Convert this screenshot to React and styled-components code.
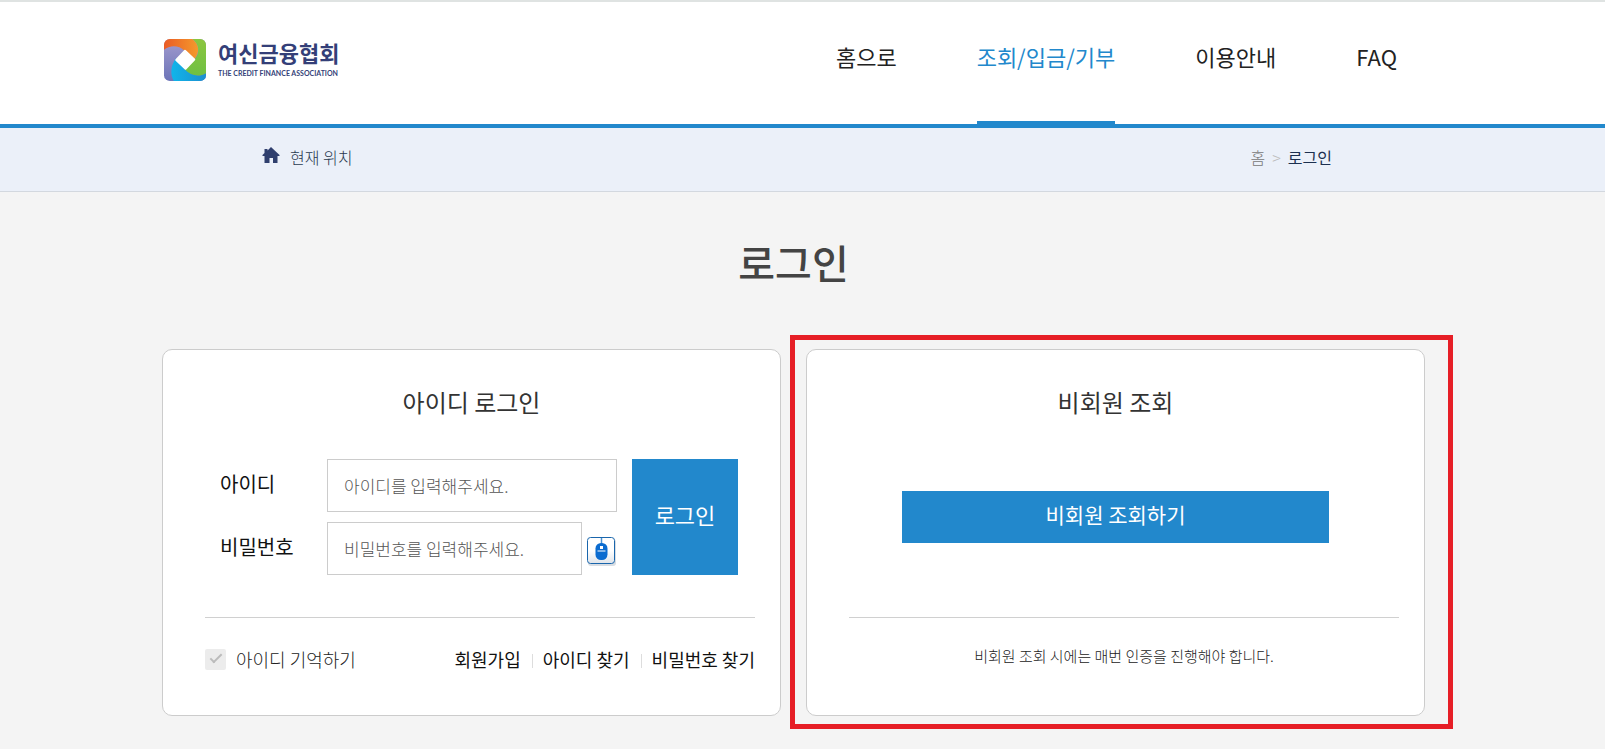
import React from "react";
import styled, { createGlobalStyle } from "styled-components";

const blue = "#2288cc";

const GlobalStyle = createGlobalStyle`
  *, *::before, *::after { box-sizing: border-box; }
  body {
    margin: 0;
    background: #f4f4f4;
    color: #222;
    font-family: "Noto Sans CJK KR", "Noto Sans", sans-serif;
    font-size: 16px;
    line-height: 24px;
  }
  h1, h2, p, ul, ol { margin: 0; padding: 0; }
  ul, ol { list-style: none; }
  a { color: inherit; text-decoration: none; }
  button, input { font: inherit; border-radius: 0; }
  button { cursor: pointer; }
`;

const Page = styled.div`
  min-height: 100vh;
  border-top: 2px solid #dfe3e2;
`;

const Band = styled.div`
  padding: 0 18px 0 0;
  background: ${(p) => p.$bg || "transparent"};
  border-bottom: ${(p) => p.$line || "0"};
`;

const Column = styled.div`
  max-width: 1263px;
  margin: 0 auto;
`;

const HeaderRow = styled(Column)`
  display: flex;
  justify-content: space-between;
  height: 122px;
  padding: 0 28px 0 2px;
`;

const Logo = styled.a`
  display: flex;
  gap: 12px;
  align-self: flex-start;
  padding-top: 37px;
`;

const LogoText = styled.span`
  display: flex;
  flex-direction: column;
  gap: 3px;
  color: #343f78;
  white-space: nowrap;
`;

const LogoName = styled.strong`
  font-size: 22px;
  line-height: 27px;
  font-weight: 700;
`;

const LogoSub = styled.span`
  font-family: Lato, sans-serif;
  font-size: 7px;
  line-height: 8px;
  font-weight: 700;
`;

const NavList = styled.ul`
  display: flex;
  gap: 80px;
  height: 100%;
`;

const NavLink = styled.a`
  display: block;
  height: 100%;
  padding-top: 38px;
  font-size: 22px;
  line-height: 32px;
  white-space: nowrap;
  color: ${(p) => (p.$active ? blue : "#222")};
  border-bottom: ${(p) => (p.$active ? `3px solid ${blue}` : "0")};
`;

const CrumbRow = styled(Column)`
  display: flex;
  justify-content: space-between;
  padding: 17px 93px 22px 100px;
`;

const Here = styled.div`
  display: flex;
  gap: 10px;
  font-weight: 300;
  color: #2a3a50;
  svg { margin-top: 2px; }
`;

const Crumbs = styled.ol`
  display: flex;
  gap: 7px;
  color: #777;
  font-weight: 300;
  strong { font-weight: 400; color: #1c3050; }
  span { color: #bbb; }
`;

const PageTitle = styled.h1`
  padding: 39px 0 56px;
  font-size: 40px;
  line-height: 62px;
  font-weight: 500;
  color: #444;
  text-align: center;
`;

const Cards = styled(Column)`
  display: grid;
  grid-template-columns: 1fr 1fr;
  gap: 25px;
  padding-bottom: 33px;
`;

const Card = styled.section`
  position: relative;
  display: flex;
  flex-direction: column;
  min-height: 367px;
  background: #fff;
  border: 1px solid #ccc;
  border-radius: 10px;
`;

const Highlight = styled.div`
  position: absolute;
  inset: -15px -29px -14px -17px;
  border: 5px solid #e61e26;
  pointer-events: none;
`;

const CardTitle = styled.h2`
  padding: 34px 0 39px;
  font-size: 24px;
  line-height: 36px;
  font-weight: 400;
  color: #333;
  text-align: center;
`;

const CardBody = styled.div`
  height: 159px;
  margin: 0 25px 0 42px;
  border-bottom: 1px solid #d0d0d0;
`;

const LoginForm = styled.form`
  display: grid;
  grid-template-columns: 107px 1fr 106px;
  row-gap: 10px;
  margin: 0 17px 0 15px;
`;

const Label = styled.label`
  grid-column: 1;
  font-size: 20px;
  line-height: 50px;
  font-weight: 400;
  color: #111;
`;

const Field = styled.div`
  grid-column: 2;
  display: flex;
  align-items: center;
  gap: 5px;
  margin-right: 15px;
`;

const TextInput = styled.input`
  flex: 1;
  min-width: 0;
  height: 53px;
  padding: 0 16px;
  border: 1px solid #ccc;
  background: #fff;
  font-size: 17px;
  font-weight: 300;
  &::placeholder { color: #555; opacity: 1; }
`;

const MouseButton = styled.button`
  display: flex;
  align-items: flex-end;
  width: 30px;
  height: 34px;
  padding: 0;
  border: 0;
  background: none;
`;

const SubmitButton = styled.button`
  grid-column: 3;
  grid-row: 1 / 3;
  padding: 0 0 6px;
  border: 0;
  background: ${blue};
  color: #fff;
  font-size: 22px;
`;

const GuestButton = styled.button`
  display: block;
  width: 427px;
  max-width: 100%;
  height: 52px;
  margin: 0 auto;
  padding: 0 0 6px;
  border: 0;
  background: ${blue};
  color: #fff;
  font-size: 21px;
`;

const GuestAction = styled.div`
  padding: 32px 17px 0 0;
`;

const CardFoot = styled.div`
  display: flex;
  justify-content: space-between;
  align-items: center;
  margin: 29px 25px 0 42px;
`;

const Remember = styled.label`
  display: flex;
  align-items: center;
  gap: 10px;
  font-size: 18px;
  font-weight: 300;
`;

const Check = styled.input`
  appearance: none;
  width: 21px;
  height: 21px;
  margin: 0;
  border-radius: 2px;
  background: #ececec;
  display: grid;
  place-items: center;
  &::before {
    content: "";
    width: 12px;
    height: 6px;
    border: solid #bbb;
    border-width: 0 0 2px 2px;
    transform: translateY(-2px) rotate(-45deg);
  }
`;

const Links = styled.ul`
  display: flex;
  font-size: 18px;
  font-weight: 400;
  color: #111;
  white-space: nowrap;
  li { display: flex; align-items: center; }
  li + li::before {
    content: "";
    width: 1px;
    height: 14px;
    margin: 4px 10px 0 11px;
    background: #ddd;
  }
`;

const Note = styled.p`
  margin: 26px 25px 0 42px;
  font-size: 15px;
  font-weight: 300;
  text-align: center;
`;

function LogoMark() {
  return (
    <svg width="42" height="42" viewBox="0 0 43 43" aria-hidden="true">
      <defs>
        <clipPath id="mark"><rect width="43" height="43" rx="6" /></clipPath>
        <linearGradient id="orange" x1="0" y1="0" x2="1" y2="0">
          <stop offset="0" stopColor="#ea5b25" /><stop offset="1" stopColor="#f59a2c" />
        </linearGradient>
        <linearGradient id="green" x1="0" y1="0" x2="0" y2="1">
          <stop offset="0" stopColor="#8cc63f" /><stop offset="1" stopColor="#6fc043" />
        </linearGradient>
        <linearGradient id="cyan" x1="1" y1="0" x2="0" y2="0">
          <stop offset="0" stopColor="#1d8fd0" /><stop offset="1" stopColor="#10b5ea" />
        </linearGradient>
        <linearGradient id="violet" x1="0" y1="0" x2="0" y2="1">
          <stop offset="0" stopColor="#a29bce" /><stop offset="1" stopColor="#6c74b8" />
        </linearGradient>
      </defs>
      <g clipPath="url(#mark)">
        <rect width="43" height="43" fill="url(#violet)" />
        <path d="M10 43C6 36 7 27 12 20L22 31C28 38 36 39 43 35V43Z" fill="url(#cyan)" />
        <path d="M29 0H43V35C36 39 28 38 21 31L32 20C37 13 36 6 29 0Z" fill="url(#green)" />
        <path d="M0 0H29C36 6 37 13 31 21L21 12C15 6 6 6 0 11Z" fill="url(#orange)" />
        <path d="M21.500 12L31 21L22 30.500L12.500 21.500Z" fill="#fff" stroke="#fff" strokeWidth="2" strokeLinejoin="round" />
      </g>
    </svg>
  );
}

function HomeIcon() {
  return (
    <svg width="18" height="17" viewBox="0 0 17 17" fill="#2f3f6e" aria-hidden="true">
      <path d="M8.500 0L17 8V9H15V16H10.500V11H7V16H2V9H0V8L2 6V2H5V3.500Z" />
    </svg>
  );
}

function MouseIcon() {
  return (
    <svg width="29" height="29" viewBox="0 0 29 29" aria-hidden="true">
      <defs>
        <linearGradient id="key" x1="0" y1="0" x2="0" y2="1">
          <stop offset="0.500" stopColor="#fff" /><stop offset="1" stopColor="#dfe4ea" />
        </linearGradient>
      </defs>
      <rect x="1" y="2" width="28" height="27" rx="3" fill="#d8dde3" />
      <rect x="0.500" y="0.500" width="27" height="26" rx="3" fill="url(#key)" stroke="#1a66ac" />
      <path d="M14.500 1V8" stroke="#4a90d0" strokeWidth="1.500" />
      <rect x="8.500" y="6" width="12" height="17" rx="5.500" fill="#0b6cd0" />
      <rect x="13" y="9" width="3" height="3" fill="#fff" />
      <path d="M10.500 14H18.500" stroke="#fff" />
    </svg>
  );
}

const menu = ["홈으로", "조회/입금/기부", "이용안내", "FAQ"];
const helpLinks = ["회원가입", "아이디 찾기", "비밀번호 찾기"];

export default function App() {
  return (
    <Page>
      <GlobalStyle />
      <Band as="header" $bg="#fff" $line={`4px solid ${blue}`}>
        <HeaderRow>
          <Logo href="#">
            <LogoMark />
            <LogoText>
              <LogoName>여신금융협회</LogoName>
              <LogoSub>THE CREDIT FINANCE ASSOCIATION</LogoSub>
            </LogoText>
          </Logo>
          <nav>
            <NavList>
              {menu.map((name, i) => (
                <li key={name}><NavLink href="#" $active={i === 1}>{name}</NavLink></li>
              ))}
            </NavList>
          </nav>
        </HeaderRow>
      </Band>
      <Band $bg="#ebf0f9" $line="1px solid #d3d8df">
        <CrumbRow>
          <Here><HomeIcon />현재 위치</Here>
          <Crumbs>
            <li><a href="#">홈</a></li>
            <li><span>&gt;</span></li>
            <li><strong>로그인</strong></li>
          </Crumbs>
        </CrumbRow>
      </Band>
      <Band as="main">
        <PageTitle>로그인</PageTitle>
        <Cards>
          <Card>
            <CardTitle>아이디 로그인</CardTitle>
            <CardBody>
              <LoginForm onSubmit={(e) => e.preventDefault()}>
                <Label htmlFor="user">아이디</Label>
                <Field><TextInput id="user" placeholder="아이디를 입력해주세요." /></Field>
                <Label htmlFor="pass">비밀번호</Label>
                <Field>
                  <TextInput id="pass" type="password" placeholder="비밀번호를 입력해주세요." />
                  <MouseButton type="button" aria-label="마우스 입력"><MouseIcon /></MouseButton>
                </Field>
                <SubmitButton>로그인</SubmitButton>
              </LoginForm>
            </CardBody>
            <CardFoot>
              <Remember><Check type="checkbox" />아이디 기억하기</Remember>
              <Links>
                {helpLinks.map((name) => <li key={name}><a href="#">{name}</a></li>)}
              </Links>
            </CardFoot>
          </Card>
          <Card>
            <CardTitle>비회원 조회</CardTitle>
            <CardBody>
              <GuestAction><GuestButton type="button">비회원 조회하기</GuestButton></GuestAction>
            </CardBody>
            <Note>비회원 조회 시에는 매번 인증을 진행해야 합니다.</Note>
            <Highlight />
          </Card>
        </Cards>
      </Band>
    </Page>
  );
}
